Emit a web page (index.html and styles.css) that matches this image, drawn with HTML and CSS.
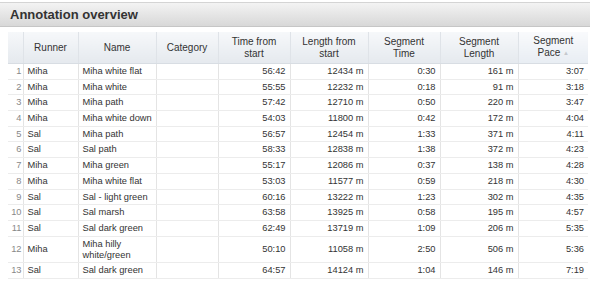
FILE: index.html
```html
<!DOCTYPE html>
<html>
<head>
  <meta charset="UTF-8">
  <title>Annotation overview</title>
  <link rel="stylesheet" href="styles.css">
</head>
<body>
  <div class="panel-title">Annotation overview</div>

  <table class="grid">
    <colgroup>
      <col style="width:15px">
      <col style="width:55px">
      <col style="width:78px">
      <col style="width:62px">
      <col style="width:72px">
      <col style="width:78px">
      <col style="width:72px">
      <col style="width:78px">
      <col style="width:70px">
    </colgroup>
    <thead>
      <tr>
        <th></th>
        <th>Runner</th>
        <th>Name</th>
        <th>Category</th>
        <th>Time from<br>start</th>
        <th>Length from<br>start</th>
        <th>Segment<br>Time</th>
        <th>Segment<br>Length</th>
        <th class="sorted">Segment<br>Pace <span class="arrow">&#9650;</span></th>
      </tr>
    </thead>
    <tbody>
      <tr><td class="num">1</td><td>Miha</td><td>Miha white flat</td><td></td><td class="r">56:42</td><td class="r">12434 m</td><td class="r">0:30</td><td class="r">161 m</td><td class="r">3:07</td></tr>
      <tr><td class="num">2</td><td>Miha</td><td>Miha white</td><td></td><td class="r">55:55</td><td class="r">12232 m</td><td class="r">0:18</td><td class="r">91 m</td><td class="r">3:18</td></tr>
      <tr><td class="num">3</td><td>Miha</td><td>Miha path</td><td></td><td class="r">57:42</td><td class="r">12710 m</td><td class="r">0:50</td><td class="r">220 m</td><td class="r">3:47</td></tr>
      <tr><td class="num">4</td><td>Miha</td><td>Miha white down</td><td></td><td class="r">54:03</td><td class="r">11800 m</td><td class="r">0:42</td><td class="r">172 m</td><td class="r">4:04</td></tr>
      <tr><td class="num">5</td><td>Sal</td><td>Miha path</td><td></td><td class="r">56:57</td><td class="r">12454 m</td><td class="r">1:33</td><td class="r">371 m</td><td class="r">4:11</td></tr>
      <tr><td class="num">6</td><td>Sal</td><td>Sal path</td><td></td><td class="r">58:33</td><td class="r">12838 m</td><td class="r">1:38</td><td class="r">372 m</td><td class="r">4:23</td></tr>
      <tr><td class="num">7</td><td>Miha</td><td>Miha green</td><td></td><td class="r">55:17</td><td class="r">12086 m</td><td class="r">0:37</td><td class="r">138 m</td><td class="r">4:28</td></tr>
      <tr><td class="num">8</td><td>Miha</td><td>Miha white flat</td><td></td><td class="r">53:03</td><td class="r">11577 m</td><td class="r">0:59</td><td class="r">218 m</td><td class="r">4:30</td></tr>
      <tr><td class="num">9</td><td>Sal</td><td>Sal - light green</td><td></td><td class="r">60:16</td><td class="r">13222 m</td><td class="r">1:23</td><td class="r">302 m</td><td class="r">4:35</td></tr>
      <tr><td class="num">10</td><td>Sal</td><td>Sal marsh</td><td></td><td class="r">63:58</td><td class="r">13925 m</td><td class="r">0:58</td><td class="r">195 m</td><td class="r">4:57</td></tr>
      <tr><td class="num">11</td><td>Sal</td><td>Sal dark green</td><td></td><td class="r">62:49</td><td class="r">13719 m</td><td class="r">1:09</td><td class="r">206 m</td><td class="r">5:35</td></tr>
      <tr><td class="num">12</td><td>Miha</td><td>Miha hilly<br>white/green</td><td></td><td class="r">50:10</td><td class="r">11058 m</td><td class="r">2:50</td><td class="r">506 m</td><td class="r">5:36</td></tr>
      <tr><td class="num">13</td><td>Sal</td><td>Sal dark green</td><td></td><td class="r">64:57</td><td class="r">14124 m</td><td class="r">1:04</td><td class="r">146 m</td><td class="r">7:19</td></tr>
    </tbody>
  </table>
</body>
</html>
```

FILE: styles.css
```css
body {
  margin: 0;
  font-family: "Liberation Sans", Arial, sans-serif;
  background: #ffffff;
  color: #333;
}
.panel-title {
  margin-top: 2px;
  height: 23px;
  line-height: 23px;
  padding-left: 10px;
  font-size: 13px;
  font-weight: bold;
  color: #333;
  background: linear-gradient(#f3f3f3, #d8d8d8);
  border-top: 1px solid #d4d4d4;
  border-bottom: 1px solid #c6c6c6;
}
.grid {
  margin: 5px 0 0 8px;
  width: 580px;
  border-collapse: collapse;
  table-layout: fixed;
  font-size: 10px;
}
.grid th {
  height: 31px;
  padding: 0 2px;
  font-weight: normal;
  line-height: 12px;
  color: #333;
  text-align: center;
  background: linear-gradient(#f6f8fa, #e5e9ee);
  border-left: 1px solid #dfe3e8;
  border-bottom: 1px solid #d8dde3;
}
.grid th:first-child {
  border-left: none;
}
.grid th.sorted {
  background: linear-gradient(#f9fafc, #e8edf3);
}
.arrow {
  font-size: 6px;
  color: #c4c8cd;
  vertical-align: middle;
}
.grid td {
  padding: 2px 4px 1.7px;
  font-size: 9.3px;
  line-height: 11px;
  color: #333;
  border-left: 1px solid #e4e4e4;
  border-bottom: 1px solid #ececec;
  white-space: nowrap;
}
.grid td:first-child {
  border-left: none;
}
.grid td.num {
  padding: 2px 1px 1.7px 0;
  text-align: right;
  color: #888;
}
.grid td.r {
  text-align: right;
}
```
